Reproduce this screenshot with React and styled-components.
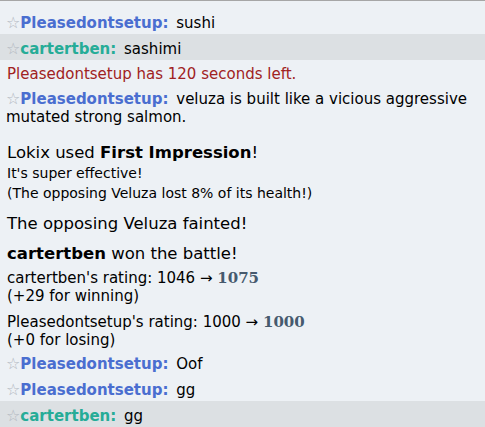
import React from "react";
import styled, { createGlobalStyle } from "styled-components";

const Global = createGlobalStyle`
  html, body {
    margin: 0;
    padding: 0;
    background: #edf1f5;
  }
  body {
    font-family: "DejaVu Sans", Verdana, sans-serif;
    color: #000;
  }
`;

const Log = styled.div`
  width: 485px;
  height: 427px;
  overflow: hidden;
  border-top: 1px solid #a6a6a6;
  box-sizing: border-box;
  padding-top: 7px;
  font-size: 15px;
`;

const Chat = styled.div`
  padding: 6px 7px 2px 6px;
  background: ${p => (p.hl ? "#dce0e3" : "transparent")};
  line-height: 18px;
  font-size: 15px;
`;

const Star = styled.span`
  color: #b3b8c1;
  font-size: 16px;
`;

const Name = styled.strong`
  color: ${p => p.color};
  font-weight: bold;
  margin-right: 3px;
`;

const Notice = styled.div`
  padding: 5px 7px 1px;
  color: #a02222;
  line-height: 18px;
  font-size: 15px;
`;

const Block = styled.div`
  padding: 0 7px;
  margin-top: ${p => p.gap || 0}px;
`;

const Big = styled.div`
  font-size: 16.5px;
  line-height: 20px;
`;

const Small = styled.div`
  font-size: 14px;
  line-height: 20px;
`;

const RatingLine = styled.div`
  font-size: 15px;
  line-height: 18px;
`;

const Rating = styled.strong`
  font-family: "DejaVu Serif", Georgia, serif;
  color: #465a6e;
`;

const BLUE = "#4a6ed0";
const TEAL = "#26ac97";

function Line({ name, color, hl, children }) {
  return (
    <Chat hl={hl}>
      <Star>☆</Star>
      <Name color={color}>{name}:</Name> {children}
    </Chat>
  );
}

export default function App() {
  return (
    <>
      <Global />
      <Log>
        <Line name="Pleasedontsetup" color={BLUE}>sushi</Line>
        <Line name="cartertben" color={TEAL} hl>sashimi</Line>
        <Notice>Pleasedontsetup has 120 seconds left.</Notice>
        <Line name="Pleasedontsetup" color={BLUE}>
          veluza is built like a vicious aggressive mutated strong salmon.
        </Line>
        <Block gap={15}>
          <Big>
            Lokix used <strong>First Impression</strong>!
          </Big>
          <Small>It's super effective!</Small>
          <Small>(The opposing Veluza lost 8% of its health!)</Small>
        </Block>
        <Block gap={11}>
          <Big>The opposing Veluza fainted!</Big>
        </Block>
        <Block gap={10}>
          <Big>
            <strong>cartertben</strong> won the battle!
          </Big>
        </Block>
        <Block gap={5}>
          <RatingLine>
            cartertben's rating: 1046 → <Rating>1075</Rating>
          </RatingLine>
          <RatingLine>(+29 for winning)</RatingLine>
        </Block>
        <Block gap={8}>
          <RatingLine>
            Pleasedontsetup's rating: 1000 → <Rating>1000</Rating>
          </RatingLine>
          <RatingLine>(+0 for losing)</RatingLine>
        </Block>
        <Line name="Pleasedontsetup" color={BLUE}>Oof</Line>
        <Line name="Pleasedontsetup" color={BLUE}>gg</Line>
        <Line name="cartertben" color={TEAL} hl>gg</Line>
      </Log>
    </>
  );
}
